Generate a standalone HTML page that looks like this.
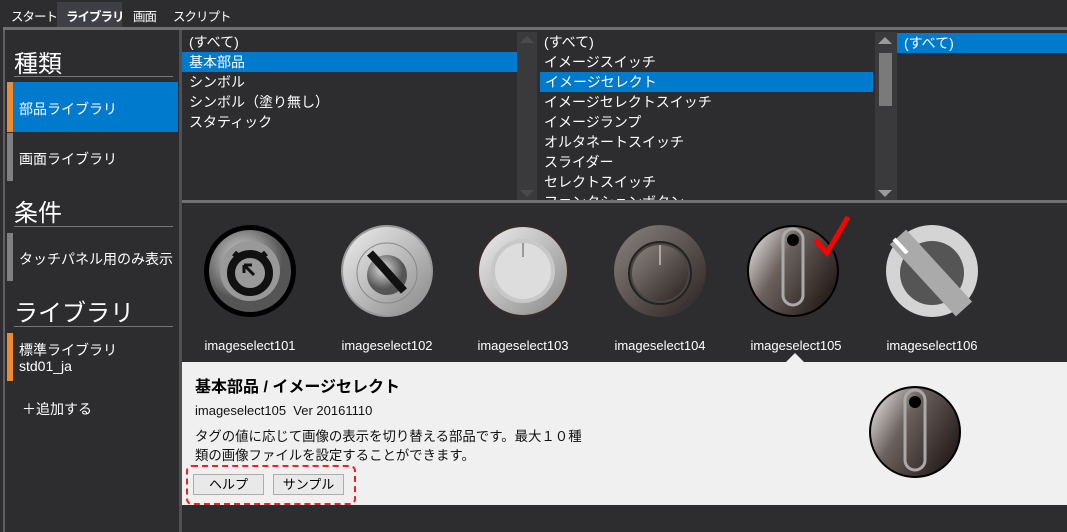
<!DOCTYPE html>
<html><head><meta charset="utf-8"><style>
*{margin:0;padding:0;box-sizing:border-box}
body{width:1067px;height:532px;background:#2d2d30;position:relative;overflow:hidden;font-family:"Liberation Sans","Noto Sans CJK JP",sans-serif;color:#fff}
.a{position:absolute}
.t{font-size:14px;white-space:nowrap}
.m{position:absolute;top:6px;font-size:12.5px;white-space:nowrap;letter-spacing:-1px}
.li{position:absolute;left:0;right:0;height:20px;line-height:20px;padding-left:7px;font-size:14px;white-space:nowrap}
.sel{background:#007acc}
.lbl{position:absolute;top:338px;font-size:13px;width:130px;text-align:center}
.btn{position:absolute;top:474px;height:21px;background:#e9e9e9;border:1px solid #adadad;color:#000;font-size:13px;text-align:center;line-height:19px}
</style></head><body>
<div class="m" style="left:11px">スタート</div>
<div class="a" style="left:57px;top:2px;width:65px;height:25px;background:#3f3f46"></div>
<div class="m" style="left:66px;font-weight:bold">ライブラリ</div>
<div class="m" style="left:133px">画面</div>
<div class="m" style="left:173px">スクリプト</div>
<div class="a" style="left:3px;top:27px;width:1064px;height:3px;background:#707070"></div>
<div class="a" style="left:3px;top:30px;width:2px;height:502px;background:#606060"></div>
<div class="a" style="left:179px;top:30px;width:3px;height:502px;background:#505052"></div>
<div class="a" style="left:14px;top:44px;font-size:24px">種類</div>
<div class="a" style="left:14px;top:76px;width:159px;height:1px;background:#777"></div>
<div class="a" style="left:7px;top:82px;width:171px;height:50px;background:#007acc"></div>
<div class="a" style="left:7px;top:82px;width:6px;height:50px;background:#f08a30"></div>
<div class="a t" style="left:19px;top:99px">部品ライブラリ</div>
<div class="a" style="left:7px;top:133px;width:6px;height:48px;background:#808080"></div>
<div class="a t" style="left:19px;top:149px">画面ライブラリ</div>
<div class="a" style="left:14px;top:193px;font-size:24px">条件</div>
<div class="a" style="left:14px;top:226px;width:159px;height:1px;background:#777"></div>
<div class="a" style="left:7px;top:233px;width:6px;height:48px;background:#808080"></div>
<div class="a t" style="left:19px;top:249px">タッチパネル用のみ表示</div>
<div class="a" style="left:14px;top:293px;font-size:24px">ライブラリ</div>
<div class="a" style="left:14px;top:326px;width:159px;height:1px;background:#777"></div>
<div class="a" style="left:7px;top:333px;width:6px;height:48px;background:#f08a30"></div>
<div class="a t" style="left:19px;top:340px">標準ライブラリ</div>
<div class="a t" style="left:19px;top:358px">std01_ja</div>
<div class="a t" style="left:22px;top:399px">＋追加する</div>
<div class="a" style="left:182px;top:32px;width:335px;height:168px;overflow:hidden">
<div class="li" style="top:0">(すべて)</div>
<div class="li sel" style="top:20px;right:0">基本部品</div>
<div class="li" style="top:40px">シンボル</div>
<div class="li" style="top:60px">シンボル（塗り無し）</div>
<div class="li" style="top:80px">スタティック</div>
</div>
<div class="a" style="left:517px;top:32px;width:20px;height:168px;background:#3a3a3d"></div>
<div class="a" style="left:520px;top:36px;width:0;height:0;border:7px solid transparent;border-bottom-color:#4a4a4d;border-top:0"></div>
<div class="a" style="left:520px;top:190px;width:0;height:0;border:7px solid transparent;border-top-color:#4a4a4d;border-bottom:0"></div>
<div class="a" style="left:537px;top:32px;width:338px;height:168px;overflow:hidden">
<div class="li" style="top:0">(すべて)</div>
<div class="li" style="top:20px">イメージスイッチ</div>
<div class="li sel" style="top:40px;left:3px;right:2px;padding-left:5px">イメージセレクト</div>
<div class="li" style="top:60px">イメージセレクトスイッチ</div>
<div class="li" style="top:80px">イメージランプ</div>
<div class="li" style="top:100px">オルタネートスイッチ</div>
<div class="li" style="top:120px">スライダー</div>
<div class="li" style="top:140px">セレクトスイッチ</div>
<div class="li" style="top:160px">ファンクションボタン</div>
</div>
<div class="a" style="left:875px;top:32px;width:20px;height:168px;background:#3a3a3d"></div>
<div class="a" style="left:878px;top:37px;border:7px solid transparent;border-bottom-color:#9a9a9a;border-top:0"></div>
<div class="a" style="left:878px;top:190px;border:7px solid transparent;border-top-color:#9a9a9a;border-bottom:0"></div>
<div class="a" style="left:879px;top:53px;width:13px;height:53px;background:#7a7a7a"></div>
<div class="a" style="left:895px;top:32px;width:2px;height:168px;background:#3a3a3d"></div>
<div class="li sel" style="left:897px;top:33px;width:170px;right:auto">(すべて)</div>
<div class="a" style="left:182px;top:200px;width:885px;height:3px;background:#707070"></div>
<svg class="a" style="left:182px;top:203px" width="885" height="160">
<defs>
<radialGradient id="g1" cx="40%" cy="35%"><stop offset="0" stop-color="#ddd"/><stop offset="1" stop-color="#555"/></radialGradient>
<linearGradient id="g2" x1="0" y1="0" x2="1" y2="1"><stop offset="0" stop-color="#eee"/><stop offset="1" stop-color="#888"/></linearGradient>
<linearGradient id="g4" x1="0" y1="0" x2="1" y2="1"><stop offset="0" stop-color="#8a8480"/><stop offset="1" stop-color="#2a2220"/></linearGradient>
<linearGradient id="g5" x1="0" y1="0" x2="1" y2="0.6"><stop offset="0" stop-color="#f4f4f4"/><stop offset="0.45" stop-color="#6a605c"/><stop offset="1" stop-color="#2a201e"/></linearGradient>
</defs>
<circle cx="68" cy="68" r="46" fill="#000"/><circle cx="68" cy="68" r="41" fill="url(#g1)"/><circle cx="68" cy="68" r="30" fill="#999"/>
<circle cx="68" cy="70" r="19" fill="none" stroke="#111" stroke-width="8"/><path d="M52 50 l6 5 M84 50 l-6 5" stroke="#111" stroke-width="6"/><path d="M62 62 l10 10 M62 62 v8 M62 62 h8" stroke="#111" stroke-width="3"/>
<circle cx="205" cy="68" r="46" fill="#999"/><circle cx="205" cy="68" r="44" fill="url(#g2)"/><circle cx="205" cy="70" r="30" fill="none" stroke="#888"/><circle cx="205" cy="72" r="20" fill="url(#g1)"/>
<path d="M188 50 L222 88" stroke="#111" stroke-width="8"/>
<circle cx="341" cy="68" r="46" fill="#3a2a28"/><circle cx="341" cy="68" r="44" fill="url(#g2)"/><circle cx="341" cy="68" r="32" fill="#c8c8c8"/><circle cx="341" cy="68" r="28" fill="#ddd"/><path d="M341 40v14" stroke="#999" stroke-width="2"/>
<circle cx="478" cy="68" r="46" fill="url(#g4)"/><circle cx="478" cy="70" r="31" fill="#4a4442" stroke="#222" stroke-width="2"/><circle cx="478" cy="70" r="28" fill="url(#g4)"/><path d="M478 42v20" stroke="#aaa" stroke-width="2"/>
<circle cx="611" cy="68" r="46" fill="#000"/><circle cx="611" cy="68" r="44" fill="url(#g5)"/><rect x="601" y="26" width="20" height="76" rx="10" fill="none" stroke="#aaa" stroke-width="3"/><circle cx="611" cy="37" r="6" fill="#000"/>
<path d="M633 37 L645 50 L666 14" fill="none" stroke="#f00" stroke-width="5"/>
<circle cx="750" cy="68" r="46" fill="#d4d4d4"/><circle cx="750" cy="70" r="32" fill="#555"/><path d="M716 34 L782 106" stroke="#aaa" stroke-width="22"/><path d="M712 36 L725 50" stroke="#fff" stroke-width="4"/>
</svg>
<div class="lbl" style="left:185px">imageselect101</div>
<div class="lbl" style="left:322px">imageselect102</div>
<div class="lbl" style="left:458px">imageselect103</div>
<div class="lbl" style="left:595px">imageselect104</div>
<div class="lbl" style="left:731px">imageselect105</div>
<div class="lbl" style="left:867px">imageselect106</div>
<div class="a" style="left:182px;top:362px;width:885px;height:143px;background:#f0f0f0"></div>
<div class="a" style="left:786px;top:353px;border:9px solid transparent;border-bottom-color:#f0f0f0;border-top:0"></div>
<div class="a" style="left:195px;top:373px;font-size:16px;font-weight:bold;color:#000">基本部品 / イメージセレクト</div>
<div class="a" style="left:195px;top:403px;font-size:13px;color:#111">imageselect105&nbsp; Ver 20161110</div>
<div class="a" style="left:195px;top:427px;font-size:13.4px;color:#111;line-height:19px;white-space:nowrap">タグの値に応じて画像の表示を切り替える部品です。最大１０種<br>類の画像ファイルを設定することができます。</div>
<div class="a" style="left:186px;top:465px;width:170px;height:40px;border:2px dashed #f02020;border-radius:6px"></div>
<div class="btn" style="left:193px;width:71px">ヘルプ</div>
<div class="btn" style="left:273px;width:71px">サンプル</div>
<svg class="a" style="left:868px;top:385px" width="94" height="94"><defs><linearGradient id="g6" x1="0" y1="0" x2="1" y2="0.6"><stop offset="0" stop-color="#f4f4f4"/><stop offset="0.45" stop-color="#6a605c"/><stop offset="1" stop-color="#2a201e"/></linearGradient></defs>
<circle cx="47" cy="47" r="46" fill="#000"/><circle cx="47" cy="47" r="44" fill="url(#g6)"/><rect x="37" y="5" width="20" height="80" rx="10" fill="none" stroke="#aaa" stroke-width="3"/><circle cx="47" cy="17" r="6" fill="#000"/></svg>
</body></html>
